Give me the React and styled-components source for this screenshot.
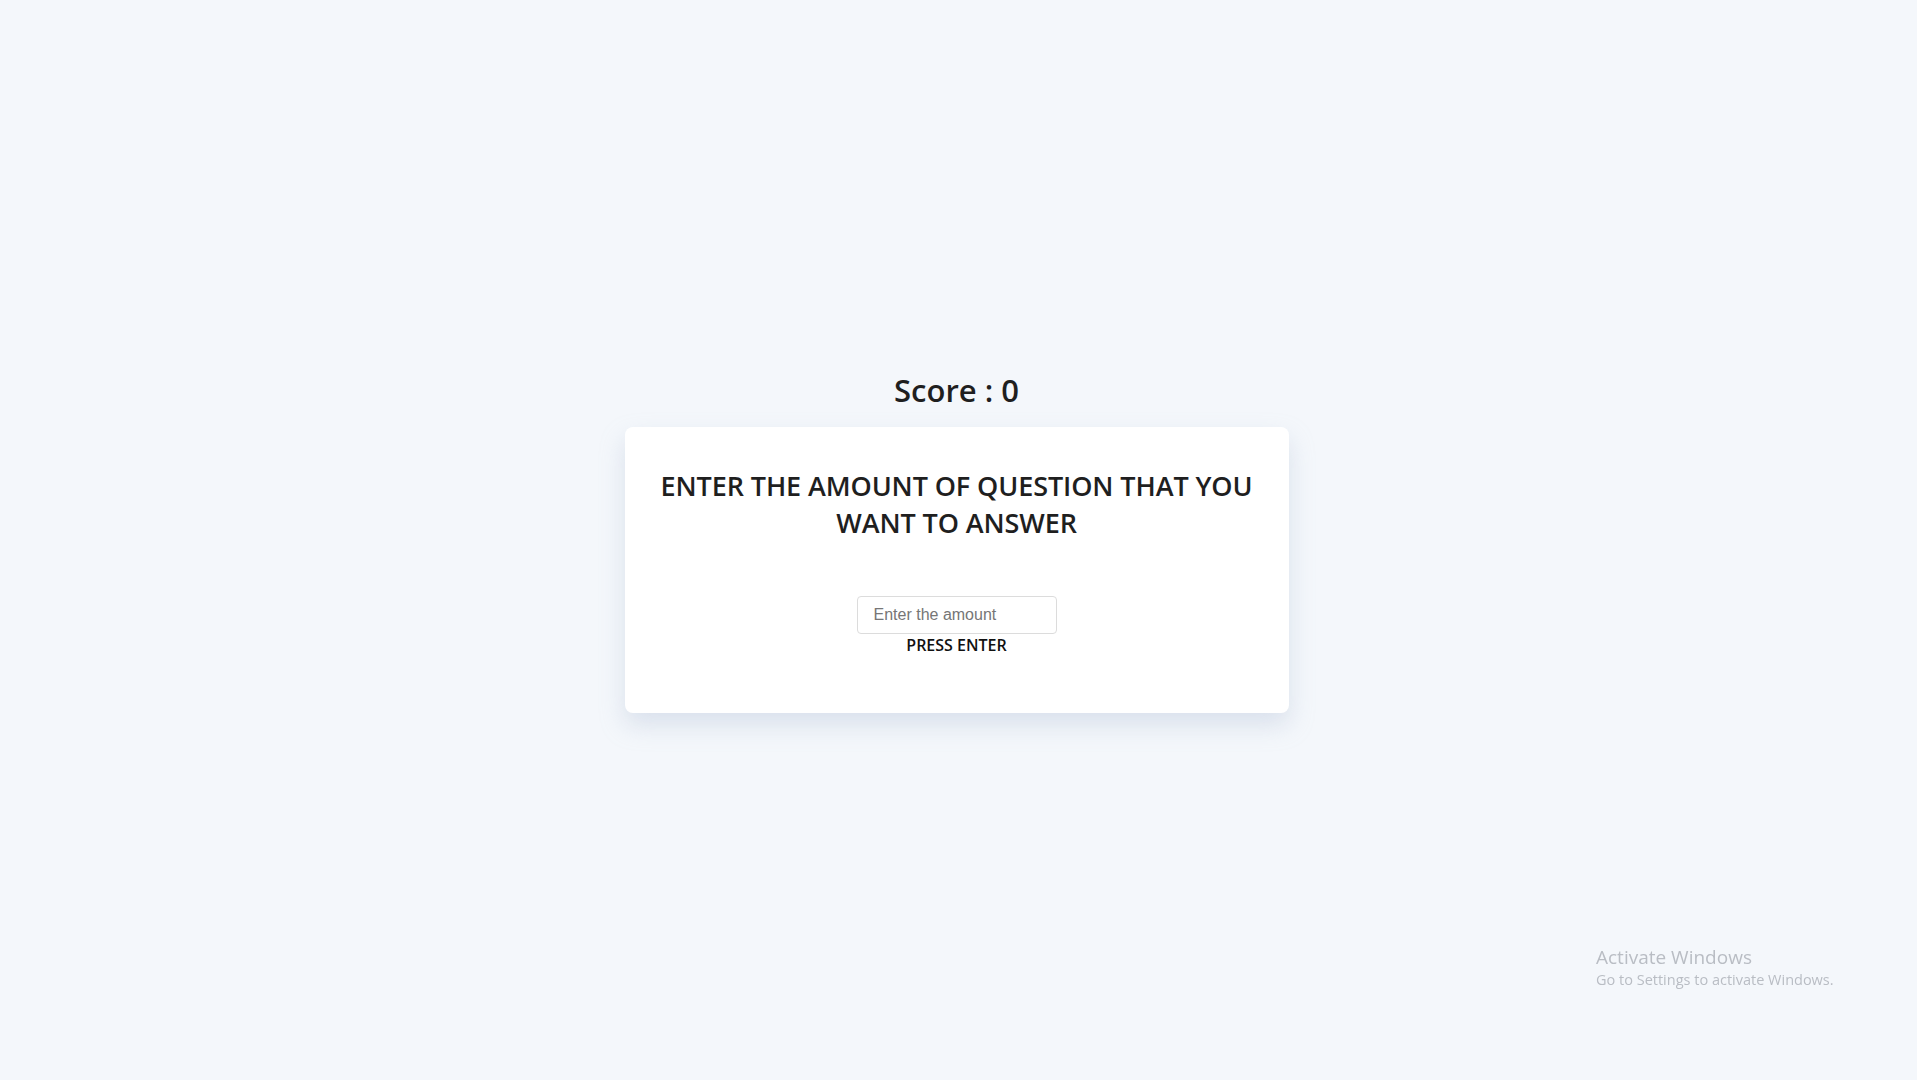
import React, { useState } from 'react';
import styled, { createGlobalStyle } from 'styled-components';

const GlobalStyle = createGlobalStyle`
  * { box-sizing: border-box; }
  html, body {
    margin: 0;
    padding: 0;
    background: #f4f7fb;
    font-family: "Open Sans", "Noto Sans", sans-serif;
    color: #1f1f1f;
  }
`;

const Page = styled.main`
  min-height: 100vh;
  padding: 1px 4px 0 0;
  display: flex;
  flex-direction: column;
  align-items: center;
  justify-content: center;
`;

const Score = styled.h1`
  margin: 0 0 15px;
  font-size: 31px;
  line-height: 43px;
  font-weight: 600;
  color: #1f1f1f;
`;

const Card = styled.section`
  width: 664px;
  background: #fff;
  border-radius: 8px;
  box-shadow: 0 12px 24px rgba(170, 184, 210, 0.35);
  padding: 40px 30px 57px;
  display: flex;
  flex-direction: column;
  align-items: center;
`;

const Heading = styled.h2`
  margin: 0 0 55px;
  font-size: 27px;
  line-height: 37px;
  font-weight: 600;
  letter-spacing: -0.1px;
  text-align: center;
  color: #1f1f1f;
`;

const Field = styled.input`
  width: 200px;
  height: 38px;
  padding: 0 16px;
  border: 1px solid #dcdcdc;
  border-radius: 4px;
  font-family: "Liberation Sans", Arial, sans-serif;
  font-size: 16px;
  color: #333;
  outline: none;
  &::placeholder { color: #767676; }
`;

const Hint = styled.label`
  font-size: 16px;
  line-height: 22px;
  font-weight: 600;
  color: #111;
`;

const Watermark = styled.div`
  position: fixed;
  left: 1596px;
  top: 944px;
  color: #b9bdc4;
  font-family: "Open Sans", "Noto Sans", sans-serif;
  p { margin: 0; }
  p:first-child { font-size: 19px; line-height: 26px; }
  p:last-child { font-size: 14.5px; line-height: 20px; }
`;

export default function App() {
  const [amount, setAmount] = useState('');
  return (
    <>
      <GlobalStyle />
      <Page>
        <Score>Score : 0</Score>
        <Card>
          <Heading>ENTER THE AMOUNT OF QUESTION THAT YOU WANT TO ANSWER</Heading>
          <Field
            id="amount"
            placeholder="Enter the amount"
            value={amount}
            onChange={e => setAmount(e.target.value)}
          />
          <Hint htmlFor="amount">PRESS ENTER</Hint>
        </Card>
      </Page>
      <Watermark>
        <p>Activate Windows</p>
        <p>Go to Settings to activate Windows.</p>
      </Watermark>
    </>
  );
}
